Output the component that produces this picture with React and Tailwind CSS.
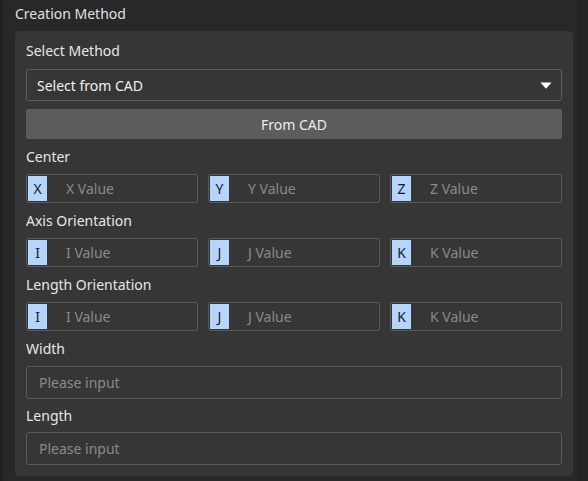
const font = { fontFamily: '"Noto Sans", "Open Sans", sans-serif' };

function Label({ children, className = '' }) {
  return <div className={`h-5 text-[14px] leading-5 text-[#e6e6e6] ${className}`}>{children}</div>;
}

function AxisInput({ letter, placeholder }) {
  return (
    <div className="flex-1 h-[29px] flex items-stretch border border-[#585858] rounded-[2px] bg-[#363636] p-px">
      <div className="w-[19px] bg-[#b4d5fe] text-[#1a1a1a] text-[14px] flex items-center justify-center">{letter}</div>
      <div className="pl-[19px] flex items-center text-[14px] text-[#8a8a8a]">{placeholder}</div>
    </div>
  );
}

function TextInput() {
  return (
    <div className="h-[33px] border border-[#5a5a5a] rounded-[3px] flex items-center pl-3 text-[14px] text-[#8a8a8a]">
      Please input
    </div>
  );
}

export default function App() {
  const rows = [
    { label: 'Center', items: [['X', 'X Value'], ['Y', 'Y Value'], ['Z', 'Z Value']] },
    { label: 'Axis Orientation', items: [['I', 'I Value'], ['J', 'J Value'], ['K', 'K Value']] },
    { label: 'Length Orientation', items: [['I', 'I Value'], ['J', 'J Value'], ['K', 'K Value']] },
  ];

  return (
    <div style={font} className="w-[588px] h-[481px] bg-[#282828] border-l-[3px] border-[#202020] flex">
      <div className="flex-1 flex flex-col pl-[12px] pr-[4px]">
        <div className="h-5 mt-[4px] text-[14px] leading-5 text-[#e0e0e0]">Creation Method</div>
        <div className="mt-[7px] bg-[#363636] rounded-[4px] px-[11px] pt-[10px] pb-[11px] flex flex-col">
          <Label>Select Method</Label>
          <div className="mt-[8px] h-[32px] border border-[#5c5c5c] rounded-[2px] flex items-center justify-between pl-[10px] pr-[9px] text-[14px] text-[#f0f0f0]">
            <span>Select from CAD</span>
            <svg width="12" height="7" viewBox="0 0 12 7">
              <path d="M0.5 0.5 L11.5 0.5 L6.5 6.3 Q6 6.8 5.5 6.3 Z" fill="#ffffff" />
            </svg>
          </div>
          <button className="mt-[8px] h-[30px] bg-[#5c5c5c] rounded-[2px] text-[14px] text-[#ececec]">From CAD</button>

          {rows.map((row, i) => (
            <div key={i} className="flex flex-col">
              <Label className="mt-[8px]">{row.label}</Label>
              <div className="mt-[7px] flex gap-[10px]">
                {row.items.map(([l, p]) => (
                  <AxisInput key={l} letter={l} placeholder={p} />
                ))}
              </div>
            </div>
          ))}

          <Label className="mt-[8px]">Width</Label>
          <div className="mt-[7px]"><TextInput /></div>
          <Label className="mt-[7px]">Length</Label>
          <div className="mt-[6px]"><TextInput /></div>
        </div>
      </div>
      <div className="w-[11px] bg-[#242424]" />
    </div>
  );
}
